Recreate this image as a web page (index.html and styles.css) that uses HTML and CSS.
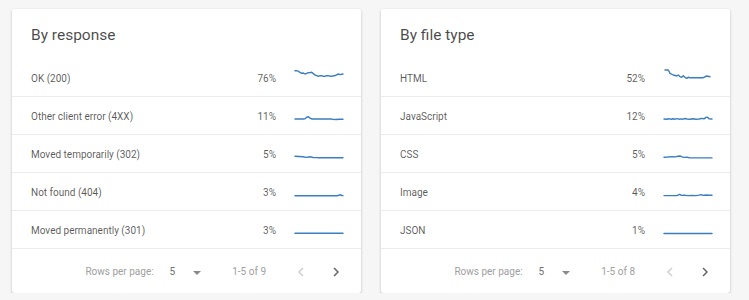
FILE: index.html
```html
<!DOCTYPE html>
<html>
<head>
<meta charset="utf-8">
<link rel="stylesheet" href="styles.css">
</head>
<body>
<div class="cards">
  <section class="card">
    <h2 class="card-title">By response</h2>
    <div class="row">
      <span class="label">OK (200)</span><span class="pct">76%</span>
      <svg class="spark" viewBox="0 0 48 16"><polyline points="0,0.7 2,0.8 3.3,1.2 5,2.4 6.7,3.3 8.3,3 10,4 11.7,3.4 13.3,2.7 15,2.6 16.7,2.3 18.3,3.6 20,5 21.7,5.6 23.3,6.3 25,5.6 26.7,5.7 28.3,6.4 30,6.3 31.7,5.6 33.3,5.7 35,6.2 36.7,6.3 38.3,5.7 40,5.7 41.7,4.8 43.3,4 45,4.6 46.7,4.3 48,4"/></svg>
    </div>
    <div class="row">
      <span class="label">Other client error (4XX)</span><span class="pct">11%</span>
      <svg class="spark" viewBox="0 0 48 16"><polyline points="0,11 8,11 10,10.8 12,9 13.5,8.8 15,10.2 17,11 36,11 38,11.4 41,11.5 44,11.2 48,11.3"/></svg>
    </div>
    <div class="row">
      <span class="label">Moved temporarily (302)</span><span class="pct">5%</span>
      <svg class="spark" viewBox="0 0 48 16"><polyline points="0,10.2 4,10.5 8,10.8 11,11.4 14,11 16,10.8 18,11.5 21,11.6 24,11.7 48,11.7"/></svg>
    </div>
    <div class="row">
      <span class="label">Not found (404)</span><span class="pct">3%</span>
      <svg class="spark" viewBox="0 0 48 16"><polyline points="0,11.7 42,11.7 44,11.2 45.5,10.8 47,11.5 48,11.6"/></svg>
    </div>
    <div class="row">
      <span class="label">Moved permanently (301)</span><span class="pct">3%</span>
      <svg class="spark" viewBox="0 0 48 16"><polyline points="0,11.3 48,11.3"/></svg>
    </div>
    <div class="footer">
      <span class="rpp">Rows per page:</span>
      <span class="size">5</span>
      <span class="caret"></span>
      <span class="range">1-5 of 9</span>
      <span class="nav nav-prev"><svg viewBox="0 0 24 24"><polyline points="14,8 10,12 14,16"/></svg></span>
      <span class="nav nav-next"><svg viewBox="0 0 24 24"><polyline points="10,8 14,12 10,16"/></svg></span>
    </div>
  </section>

  <section class="card">
    <h2 class="card-title">By file type</h2>
    <div class="row">
      <span class="label">HTML</span><span class="pct">52%</span>
      <svg class="spark" viewBox="0 0 48 16"><polyline points="1,0 4.3,0 6,3.3 9.3,5 12.7,6 14.3,5 16,6.7 17.7,7.3 19.3,5.7 21,7.3 22.7,8.3 24.3,7.3 26,7.7 29.3,7.7 34.3,7.7 39.3,7.7 42.7,6 46,6.7"/></svg>
    </div>
    <div class="row">
      <span class="label">JavaScript</span><span class="pct">12%</span>
      <svg class="spark" viewBox="0 0 48 16"><polyline points="0,11 3,11.2 5,10.7 7,11.3 9,10.8 11,11.2 13,10.6 15,11.2 17,10.9 19,11.2 21,10.5 23,11 26,11.2 29,10.8 32,11.2 35,11 38,10.4 40,10.9 42,9.4 43.5,9.2 45,10.8 48,11"/></svg>
    </div>
    <div class="row">
      <span class="label">CSS</span><span class="pct">5%</span>
      <svg class="spark" viewBox="0 0 48 16"><polyline points="0,11.3 4,11 8,10.6 11,10.9 14,10.2 16,10 18,10.8 20,11.4 23,11.2 26,11.9 48,11.9"/></svg>
    </div>
    <div class="row">
      <span class="label">Image</span><span class="pct">4%</span>
      <svg class="spark" viewBox="0 0 48 16"><polyline points="0,11.6 13,11.6 15.5,10.4 17.5,11.4 20,11.2 24,11.6 28,11.4 32,11.6 35,11.1 37,10.6 39,11.4 42,11 45,11.3 48,11.2"/></svg>
    </div>
    <div class="row">
      <span class="label">JSON</span><span class="pct">1%</span>
      <svg class="spark" viewBox="0 0 48 16"><polyline points="0,11.5 48,11.5"/></svg>
    </div>
    <div class="footer">
      <span class="rpp">Rows per page:</span>
      <span class="size">5</span>
      <span class="caret"></span>
      <span class="range">1-5 of 8</span>
      <span class="nav nav-prev"><svg viewBox="0 0 24 24"><polyline points="14,8 10,12 14,16"/></svg></span>
      <span class="nav nav-next"><svg viewBox="0 0 24 24"><polyline points="10,8 14,12 10,16"/></svg></span>
    </div>
  </section>
</div>
</body>
</html>
```
FILE: styles.css
```css
* { box-sizing: border-box; }

body {
  margin: 0;
  background: #f6f6f6;
  font-family: Roboto, "Liberation Sans", Arial, sans-serif;
}

.cards {
  display: flex;
  gap: 20px;
  padding: 9px 0 0 12px;
}

.card {
  width: 349px;
  height: 284px;
  background: #fff;
  border-radius: 2px;
  box-shadow: 0 1px 3px rgba(0,0,0,0.2), 0 1px 1px rgba(0,0,0,0.12), 0 2px 1px -1px rgba(0,0,0,0.1);
  display: flex;
  flex-direction: column;
}

.card-title {
  margin: 0;
  height: 50px;
  padding: 16px 0 0 19px;
  font-size: 15.5px;
  line-height: 20px;
  font-weight: 400;
  color: rgba(0,0,0,0.72);
}

.row {
  height: 38px;
  display: flex;
  align-items: center;
  padding: 2px 18px 0 19px;
  border-bottom: 1px solid #ececec;
  font-size: 10px;
  color: rgba(0,0,0,0.66);
}

.label { flex: 1; }

.pct {
  width: 40px;
  text-align: right;
  margin-right: 19px;
}

.spark {
  width: 48px;
  height: 16px;
  overflow: visible;
  margin-top: -1px;
}

.spark polyline {
  fill: none;
  stroke: #3a7ebf;
  stroke-width: 1.4;
  stroke-linejoin: round;
  stroke-linecap: round;
}

.footer {
  flex: 1;
  display: flex;
  align-items: center;
  justify-content: flex-end;
  padding: 1px 13px 0 0;
  font-size: 10px;
  color: #a0a0a0;
}

.size {
  margin-left: 16px;
  color: #6e6e6e;
}

.caret {
  width: 0;
  height: 0;
  margin: 2px 0 0 18px;
  border-left: 4.5px solid transparent;
  border-right: 4.5px solid transparent;
  border-top: 4.5px solid #8a8a8a;
}

.range {
  margin-left: 31px;
}

.nav {
  width: 24px;
  height: 24px;
  display: flex;
}

.nav svg {
  width: 24px;
  height: 24px;
}

.nav polyline {
  fill: none;
  stroke-width: 1.5;
}

.nav-prev { margin-left: 23px; }
.nav-prev polyline { stroke: #cfcfcf; }
.nav-next { margin-left: 11px; }
.nav-next polyline { stroke: #666; }
```
